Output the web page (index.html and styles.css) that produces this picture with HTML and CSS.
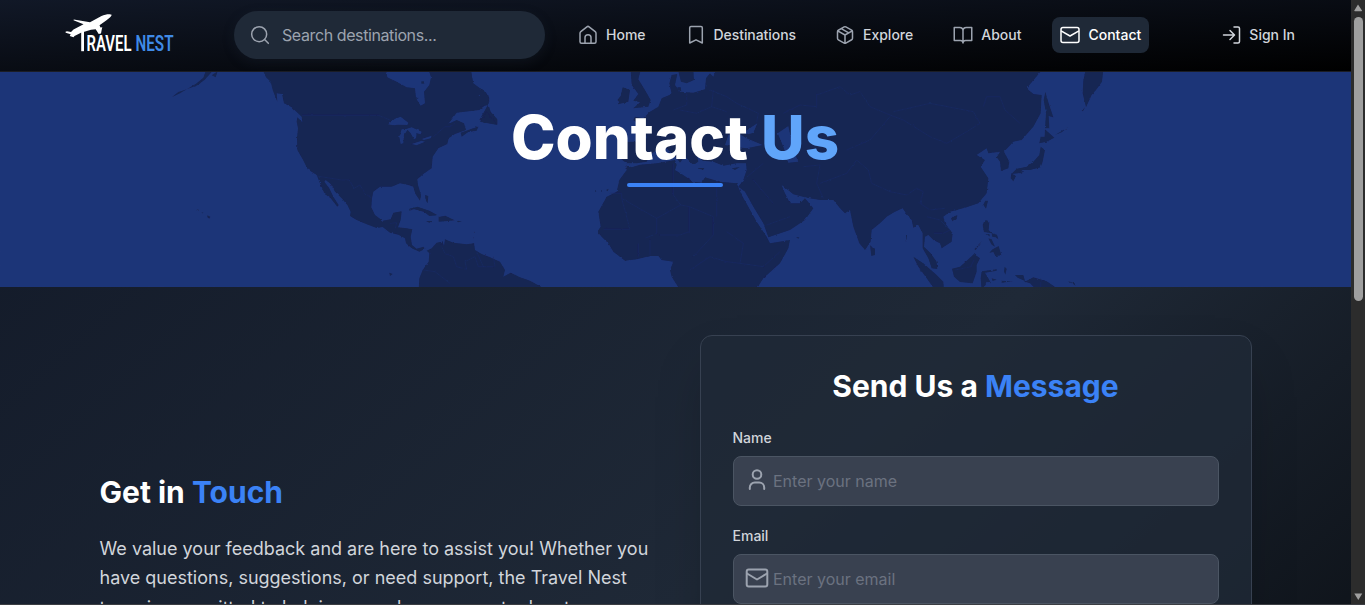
FILE: index.html
```html
<!DOCTYPE html>
<html lang="en">
<head>
<meta charset="utf-8">
<title>Travel Nest - Contact</title>
<link rel="stylesheet" href="styles.css">
</head>
<body>
<div class="window">
  <div class="page">
    <header class="header">
      <svg class="logo" width="116" height="52" viewBox="60 8 116 52" role="img" aria-label="Travel Nest">
        <path class="logo-plane" d="M65.500 31.800L67 31.300l4 .7 2.500-2.500 10-5.300L73.500 20.300l.3-.8L90 22.200l11.500-6.200c4-1.900 9-2 10-1.200.6 1-2.500 3.800-5 5.500L99.500 25.200l1 2.300 1.800-.2-.6 2.400-.7 3.800-2.300.6-3-4.800L91 29.800l-10 2.900-6.500 3.300-1 1.300-3.800-1.300 1-1.800-5-1.400z"/>
        <path class="logo-plane" d="M81.200 32h2.800v19.200h-2.800z"/>
        <text class="logo-text" x="86.500" y="51" textLength="45" lengthAdjust="spacingAndGlyphs">RAVEL</text>
        <text class="logo-text logo-blue" x="135.500" y="51" textLength="38" lengthAdjust="spacingAndGlyphs">NEST</text>
      </svg>
      <div class="search">
        <svg class="icon fine" width="20" height="20" viewBox="0 0 24 24"><circle cx="11" cy="11" r="9"/><path d="M17.500 17.500L22 22"/></svg>
        <span>Search destinations...</span>
      </div>
      <nav class="nav">
        <a class="nav-link home"><svg class="icon" width="20" height="20" viewBox="0 0 20 20"><path d="M2 8.300c0-.6.3-1.200.8-1.600L8.900 1.800a1.800 1.800 0 0 1 2.200 0l6.100 4.900c.5.4.8 1 .8 1.600v8.400a1.500 1.500 0 0 1-1.500 1.500h-13A1.500 1.500 0 0 1 2 16.700zM7 18v-5.500C7 10.800 8.200 9.700 10 9.700s3 1.100 3 2.800V18"/></svg>Home</a>
        <a class="nav-link dest"><svg class="icon" width="20" height="20" viewBox="0 0 20 20"><path d="M3.700 2.800c0-.8.5-1.300 1.300-1.300h10c.8 0 1.300.5 1.300 1.300v15.200L10 14.800 3.700 18z"/></svg>Destinations</a>
        <a class="nav-link explore"><svg class="icon fine" width="20" height="20" viewBox="0 0 24 24"><path d="M21 16V8a2 2 0 0 0-1-1.730l-7-4a2 2 0 0 0-2 0l-7 4A2 2 0 0 0 3 8v8a2 2 0 0 0 1 1.730l7 4a2 2 0 0 0 2 0l7-4A2 2 0 0 0 21 16zM3.300 7l8.700 5 8.700-5M12 22V12M7.500 4.300l9 5.150"/></svg>Explore</a>
        <a class="nav-link about"><svg class="icon fine" width="20" height="20" viewBox="0 0 24 24"><path d="M1.500 3H8a4 4 0 0 1 4 4v14.500a3 3 0 0 0-3-3H1.500zM22.500 3H16a4 4 0 0 0-4 4v14.500a3 3 0 0 1 3-3h7.500z"/></svg>About</a>
        <a class="nav-link contact active"><svg class="icon" width="20" height="20" viewBox="0 0 20 20"><rect x="1" y="2.500" width="18" height="15" rx="2"/><path d="M1.500 6.200L10 11l8.500-4.800"/></svg>Contact</a>
      </nav>
      <a class="nav-link signin"><svg class="icon" width="20" height="20" viewBox="0 0 20 20"><path d="M2.500 10h10.500M9 5.500L13.500 10 9 14.500M13 2h4A1.500 1.500 0 0 1 18.500 3.500v13a1.500 1.500 0 0 1-1.500 1.500H13"/></svg>Sign In</a>
    </header>

    <section class="hero">
      <svg class="map" width="1351" height="215" viewBox="0 0 1351 215" aria-hidden="true">
        <defs><filter id="coast" x="0" y="0" width="1" height="1"><feTurbulence type="fractalNoise" baseFrequency=".25" numOctaves="2" seed="4"/><feDisplacementMap in="SourceGraphic" scale="2.200" xChannelSelector="R" yChannelSelector="G"/></filter></defs>
        <g filter="url(#coast)">
          <rect class="sea" width="1351" height="215"/>
          <!-- Americas -->
          <g transform="translate(160 -2) scale(.33333)">
            <path class="land" d="M308 0L318 22 332 35 338 60 352 95 350 70 366 72 372 100 395 112 425 140 427 157 412 142 410 155 414 175 411 205 412 240 428 268 443 298 470 315 480 340 494 372 512 385 532 410 536 405 520 380 508 355 493 335 497 330 512 342 525 365 545 385 562 405 572 425 570 438 590 450 620 463 650 474 668 471 690 488 715 494 735 505 738 520 755 535 778 545 795 537 808 550 806 575 788 600 778 625 776 660H1160L1150 654 1110 632 1080 622 1052 608 1030 620 1035 600 1020 575 990 562 965 552 945 540 942 520 920 523 880 518 855 508 852 528 848 514 830 518 815 535 800 542 790 530 770 536 756 525 752 500 757 478 740 475 714 472 722 450 725 424 700 428 692 448 668 452 645 435 634 412 636 385 640 365 660 350 695 350 720 340 745 345 760 350 765 370 780 392 783 375 774 345 772 328 790 312 815 295 818 260 835 235 862 222 866 205 885 192 918 180 912 160 890 150 865 162 890 128 958 120 988 95 985 75 955 78 972 64 940 40 933 0z"/>
            <path class="land" d="M985 103L958 150 998 156 1012 164 1012 148 992 125zM905 200L902 188 935 176 955 170 950 182 925 186zM945 168l10 4-4 5zM748 416l25-6 35 12 25 14-25 2-15-12-30-8-15 4zM836 441l20-4 28 14-20 2-28 2zM798 453l18 0-8 5zM890 452l16 2-12 3zM795 375l10 3-2 22-5-8zM35 82l20-16 25-8-20 12zM80 58l28-17 22-18 8-22 22 0-26 28-20 16zM155 16l18-12-6 18zM110 418l8 2-4 2zM125 427l6 2-5 1zM142 436l9 4-3 6-6-4zM688 608l10 4-8 6zM842 516h5v8h-5zM937 468l2 4-2 0zM942 484l2 5-2 0zM941 500l2 5-2 0zM938 520l5 0-4 4z"/>
            <path class="sea" d="M678 0L682 22 710 35 740 52 765 55 768 85 782 107 795 100 792 65 808 45 813 22 806 0zM684 163L705 146 722 140 745 158 742 165 715 164 700 166zM722 222L718 200 725 178 745 176 732 195 730 220zM740 176L755 172 785 185 782 193 770 190 768 205 762 208 752 190zM755 222L785 212 795 215 770 226zM785 207L815 197 812 205 792 210zM768 80l8 4-6 4z"/>
            <path class="land" d="M784 34h9v7h-9z"/>
            <path class="border" d="M426 136H655L690 150M820 200L855 170 870 170 885 160M470 318L545 330 568 330 582 355 600 345 615 370 634 384M690 460L710 458 706 475M845 530L855 550 880 560 890 590 920 598 915 575 945 560 955 590 1000 590M790 600L825 605 870 640M950 545L970 590M1000 560L1005 590"/>
          </g>
          <!-- Europe, Africa and western Asia -->
          <g transform="translate(480 -2) scale(.33333)">
            <path class="land" d="M440 285L455 292 480 284 530 280 585 270 590 285 585 300 605 312 640 335 665 338 675 322 720 335 770 340 785 375 805 410 830 455 860 500 870 520 930 510 925 535 900 580 850 625 828 660H600L575 620 570 600 580 575 545 570 535 558 510 558 470 568 435 572 400 545 385 520 365 500 352 485 362 470 355 425 380 380 410 365 418 330 440 300z"/>
            <path class="land" d="M440 280L424 268 430 215 480 215 500 205 495 175 460 150 465 140 490 145 510 125 535 110 545 85 575 72 568 40 575 15 592 12 585 45 600 65 640 68 675 58 678 25 690 10 700 20 708 0H1686L1640 55 1660 72 1685 75 1682 130 1660 170 1625 210 1600 215 1572 245 1588 275 1585 295 1563 303 1560 275 1550 262 1560 245 1525 250 1520 235 1490 255 1515 270 1502 290 1525 325 1520 370 1495 400 1460 412 1410 425 1390 440 1395 460 1418 490 1415 515 1385 535 1380 520 1360 510 1345 495 1335 500 1332 530 1352 550 1370 575 1372 597 1355 595 1345 565 1328 535 1328 490 1315 465 1300 473 1295 450 1278 430 1268 415 1245 425 1220 440 1200 460 1175 480 1172 515 1155 540 1138 520 1120 470 1110 420 1095 430 1080 415 1060 390 1020 390 980 383 940 373 905 345 915 370 930 400 960 400 975 385 1000 415 975 450 930 480 865 502 850 460 820 410 795 365 775 350 790 330 800 300 798 280 770 280 730 287 700 275 668 272 650 250 655 275 640 285 625 270 600 240 585 240 612 262 600 278 590 265 560 235 530 240 510 255 500 275 470 280z"/>
            <path class="land" d="M452 0H482L475 28 495 60 512 90 505 110 460 115 480 97 460 92 475 72 455 45zM428 52L450 60 445 95 415 103 412 90 422 78zM594 0H640L642 30 620 40 603 35zM592 52h10l2 12-10-4zM648 294h25l-3 5zM755 295l25-4-15 9zM0 55L15 62 28 85 25 105 0 110zM0 155L20 125 40 150 52 165 0 155zM345 360l4 4-4 2zM360 361l6 1-4 4zM378 360l8-4-3 8zM948 502h10l-3 4zM285 463l6 2zM296 480l6 2z"/>
            <path class="sea" d="M735 225L745 195 775 190 800 205 848 225 800 235 760 230zM793 185L832 160 820 188 805 193zM893 190L925 168 932 200 940 240 955 275 925 278 910 230zM640 40L665 35 675 42 655 50z"/>
            <path class="border" d="M385 370H425V385L530 445 602 405 580 375V280M425 385L450 478H370M530 445V490L495 505M602 405L628 410 700 440V495L640 560M710 330V440M628 410V485L600 495 540 495M475 520V560M510 510V555M740 485L790 520 780 580 850 590 900 545M630 600L690 560 740 575 780 580M690 60L740 80 770 100 835 130 830 155M620 70V105L580 120M700 60L695 110 740 125M600 120L650 130 695 110M790 330L850 280M820 330L880 400M860 465L930 440M970 290L1020 285 1010 340 1030 385M910 130L960 105 1010 110V75L1080 50 1110 75 1140 65 1170 110 1230 135 1270 150 1350 200 1400 220 1460 185 1500 160 1480 125 1350 100 1240 125M1510 110L1520 80 1560 80 1575 120 1620 160M1100 240L1170 210 1230 140M1020 340L1100 310 1130 270 1165 300 1175 340 1230 365 1280 375 1310 355 1330 365 1320 400 1350 420 1395 415M1340 440L1380 450 1410 480M1360 490L1390 490 1410 480"/>
          </g>
          <!-- Pacific rim islands -->
          <g transform="translate(800 -2) scale(.33333)">
            <path class="land" d="M858 0H910L906 35 888 60 875 75 858 112 848 70 850 30zM736 65L746 100 760 142 746 138 748 175 735 175 738 130 731 90zM735 178L763 203 740 215 718 220 722 200 734 200zM722 230L735 240 728 275 722 292 690 300 668 300 655 310 634 312 650 296 680 290 700 275 718 255zM634 310L648 318 640 334 632 325zM653 305l20-2-12 8zM556 392l8 0-6 24-8-12zM458 440l14-4-2 12-12 6-5-8zM554 450L568 455 566 480 575 490 552 486 548 465zM560 492l8 0 2 8zM575 490l16 4 4 14-8-6-10-2zM565 505l10 3 10 22-10-6zM568 548l10-10 18-10 8 28-18 2-6-12zM523 538l22-24-18 26zM456 596L480 590 505 568 522 552 540 565 530 585 530 605 518 640 480 636 462 620zM340 560L370 580 410 615 430 635 432 660H405L380 625 355 590zM545 604L590 598 590 602 555 608 565 625 573 640 560 635 552 650 545 660 542 625zM614 590l6 6-4 18-4-10zM600 632l36 2-30 4zM575 625l15 4-12 4zM645 615l25 0 5 18-22-10zM675 635L700 622 740 634 770 654V660H710L690 640zM210 525L225 540 225 555 214 558zM318 495l3 0-2 22zM358 597l8 8-4 0zM845 122l10-10-6 12zM765 195l20-12 20-12-20 16zM935 45l15 10zM612 380l4-6zM640 345l2-8zM760 490l6-8zM800 632l24 8 4 8-12-8z"/>
            <path class="border" d="M465 600L490 595 512 590 522 570M722 625V654"/>
          </g>
        </g>
      </svg>
      <div class="hero-content">
        <h1>Contact <span>Us</span></h1>
        <div class="rule"></div>
      </div>
    </section>

    <main class="main">
      <section class="intro">
        <h2>Get in <span>Touch</span></h2>
        <p>We value your feedback and are here to assist you! Whether you have questions, suggestions, or need support, the Travel Nest team is committed to helping you plan your next adventure.</p>
      </section>
      <section class="card">
        <h2>Send Us a <span>Message</span></h2>
        <div class="label">Name</div>
        <div class="field"><svg class="icon" width="24" height="24" viewBox="0 0 24 24"><circle cx="12" cy="6.500" r="4.300"/><path d="M4.800 21v-1.500a5 5 0 0 1 5-5h4.400a5 5 0 0 1 5 5V21"/></svg><span>Enter your name</span></div>
        <div class="label">Email</div>
        <div class="field"><svg class="icon" width="24" height="24" viewBox="0 0 24 24"><rect x="1.700" y="3.500" width="20.600" height="17" rx="2"/><path d="M2 7.500L12 13.500l10-6"/></svg><span>Enter your email</span></div>
      </section>
    </main>
  </div>
  <div class="scrollbar">
    <svg width="14" height="605" viewBox="0 0 14 605"><path d="M3.300 10.500L7 4.500l4 6q.2.700-.6.700H3.900q-.8 0-.6-.7zM3.300 593.500h8L7.300 600z"/><rect x="3" y="17" width="9" height="284" rx="4.500"/></svg>
  </div>
  <div class="window-edge"></div>
</div>
</body>
</html>
```
FILE: styles.css
```css
* { box-sizing: border-box; }
body { margin: 0; font-family: Inter, "Liberation Sans", sans-serif; background: #000; overflow: hidden; }
h1, h2, p { margin: 0; }
.window { position: relative; display: flex; width: 1365px; height: 605px; overflow: hidden; }
.page {
  width: 1351px; height: 605px; overflow: hidden;
  background: linear-gradient(to bottom right, #111827, #1f2937, #000) 0 0 / 1351px 1216px no-repeat;
}
.icon { display: block; flex: none; fill: none; stroke: currentColor; stroke-width: 1.5; stroke-linecap: round; stroke-linejoin: round; }
.fine { stroke-width: 1.8; }

.header {
  display: flex; align-items: center; height: 72px; padding: 0 48px 2px 60px;
  background: linear-gradient(to bottom right, #111827, #000);
  border-bottom: 1px solid #1b1d24;
}
.logo { display: block; margin-top: -2px; }
.logo-plane { fill: #fff; }
.logo-text { fill: #fff; font: 600 21.5px Roboto, sans-serif; }
.logo-blue { fill: #3f8ae6; }
.search {
  display: flex; align-items: center; gap: 12px; width: 311px; height: 48px;
  margin-left: 58px; padding-left: 16px; border-radius: 24px;
  background: #1f2937; color: #9ca3af; font-size: 16px; letter-spacing: -.4px;
  box-shadow: 0 4px 12px rgba(31, 41, 55, .3);
}
.nav { display: flex; }
.nav-link { display: flex; align-items: center; gap: 8px; height: 36px; padding: 0 8px; border-radius: 8px; color: #d1d5db; font-size: 14px; font-weight: 500; white-space: nowrap; }
.nav-link .icon { color: #9ca3af; }
.home { margin-left: 25px; }
.dest { margin-left: 24px; letter-spacing: -.07px; }
.explore { margin-left: 23px; }
.about { margin-left: 24px; }
.contact { margin-left: 23px; }
.nav-link.active { background: #1f2937; color: #fff; }
.active .icon, .signin .icon { color: inherit; }
.signin { margin-left: auto; }

.hero { position: relative; height: 215px; background: #1e3578; overflow: hidden; }
.map { display: block; position: absolute; inset: 0; }
.sea { fill: #1e3578; }
.land { fill: #162553; }
.border { fill: none; stroke: #1a2c63; stroke-width: 2; }
.hero-content { position: relative; display: flex; flex-direction: column; align-items: center; width: 1350px; padding-top: 35px; }
h1 { font-size: 60px; line-height: 60px; font-weight: 800; color: #fff; }
h1 span { color: #60a5fa; }
.rule { width: 96px; height: 4px; margin-top: 16px; border-radius: 2px; background: #3b82f6; }

.main { display: flex; justify-content: space-between; padding: 48px 99px 0 99.5px; }
h2 { font-size: 30px; line-height: 36px; font-weight: 700; color: #fff; }
h2 span { color: #3b82f6; }
.intro { width: 560px; padding-top: 139px; }
.intro p { margin-top: 24px; color: #d1d5db; font-size: 18px; line-height: 29.25px; }
.card {
  width: 552px; height: 700px; padding: 32px; border: 1px solid #374151; border-radius: 12px;
  background: rgba(31, 41, 55, .8); box-shadow: 0 25px 50px -12px rgba(0, 0, 0, .25);
}
.card h2 { width: 485px; text-align: center; }
.label { margin: 24px 0 0 -.5px; color: #d1d5db; font-size: 14px; line-height: 20px; font-weight: 500; }
.field {
  display: flex; align-items: center; gap: 4px; height: 50px; margin-top: 8px; padding: 0 0 2px 11px;
  border: 1px solid #4b5563; border-radius: 8px; background: #394150; color: #6b7280; font-size: 16px;
}
.field .icon { color: #9ca3af; stroke-width: 2; }
.field span { padding-top: 1px; }
.field + .label { margin-top: 20px; }

.scrollbar { width: 14px; height: 605px; background: #2c2c2c; }
.scrollbar svg { display: block; fill: #9f9f9f; }
.window-edge { position: absolute; left: 0; right: 0; bottom: 0; height: 1px; background: #3b3d42; }
```
